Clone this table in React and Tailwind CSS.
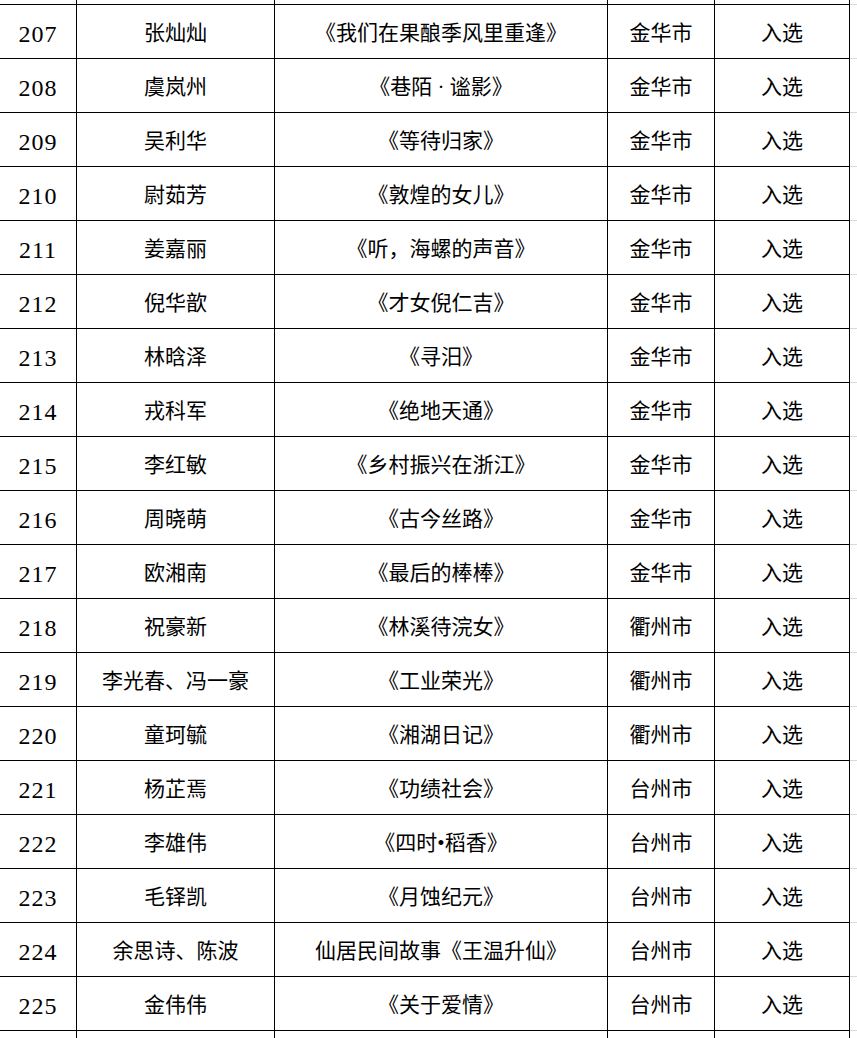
const rows = [
  ['207', '张灿灿', '《我们在果酿季风里重逢》', '金华市'],
  ['208', '虞岚州', '《巷陌 · 谧影》', '金华市'],
  ['209', '吴利华', '《等待归家》', '金华市'],
  ['210', '尉茹芳', '《敦煌的女儿》', '金华市'],
  ['211', '姜嘉丽', '《听，海螺的声音》', '金华市'],
  ['212', '倪华歆', '《才女倪仁吉》', '金华市'],
  ['213', '林晗泽', '《寻汨》', '金华市'],
  ['214', '戎科军', '《绝地天通》', '金华市'],
  ['215', '李红敏', '《乡村振兴在浙江》', '金华市'],
  ['216', '周晓萌', '《古今丝路》', '金华市'],
  ['217', '欧湘南', '《最后的棒棒》', '金华市'],
  ['218', '祝豪新', '《林溪待浣女》', '衢州市'],
  ['219', '李光春、冯一豪', '《工业荣光》', '衢州市'],
  ['220', '童珂毓', '《湘湖日记》', '衢州市'],
  ['221', '杨芷焉', '《功绩社会》', '台州市'],
  ['222', '李雄伟', '《四时•稻香》', '台州市'],
  ['223', '毛铎凯', '《月蚀纪元》', '台州市'],
  ['224', '余思诗、陈波', '仙居民间故事《王温升仙》', '台州市'],
  ['225', '金伟伟', '《关于爱情》', '台州市'],
];

const font = { fontFamily: "'Liberation Serif', 'Noto Sans CJK SC', serif" };

function Row({ cells, h }) {
  const cell = 'flex items-center justify-center border-r border-b border-black shrink-0 pt-[4px]';
  return (
    <div className="flex" style={{ height: h }}>
      <div className={`${cell} w-[77px] text-[24px] tracking-[1px]`}>{cells?.[0]}</div>
      <div className={`${cell} w-[198px] text-[21px]`}>{cells?.[1]}</div>
      <div className={`${cell} w-[333px] text-[21px]`}>{cells?.[2]}</div>
      <div className={`${cell} w-[107px] text-[21px]`}>{cells?.[3]}</div>
      <div className={`${cell} w-[135px] text-[21px]`}>{cells ? '入选' : null}</div>
      <div className="flex-1 border-b border-[#dadada]" />
    </div>
  );
}

export default function App() {
  return (
    <div className="w-[857px] h-[1038px] overflow-hidden bg-white text-black" style={font}>
      <Row h={5} />
      {rows.map(r => <Row key={r[0]} cells={r} h={54} />)}
      <Row h={54} />
    </div>
  );
}
